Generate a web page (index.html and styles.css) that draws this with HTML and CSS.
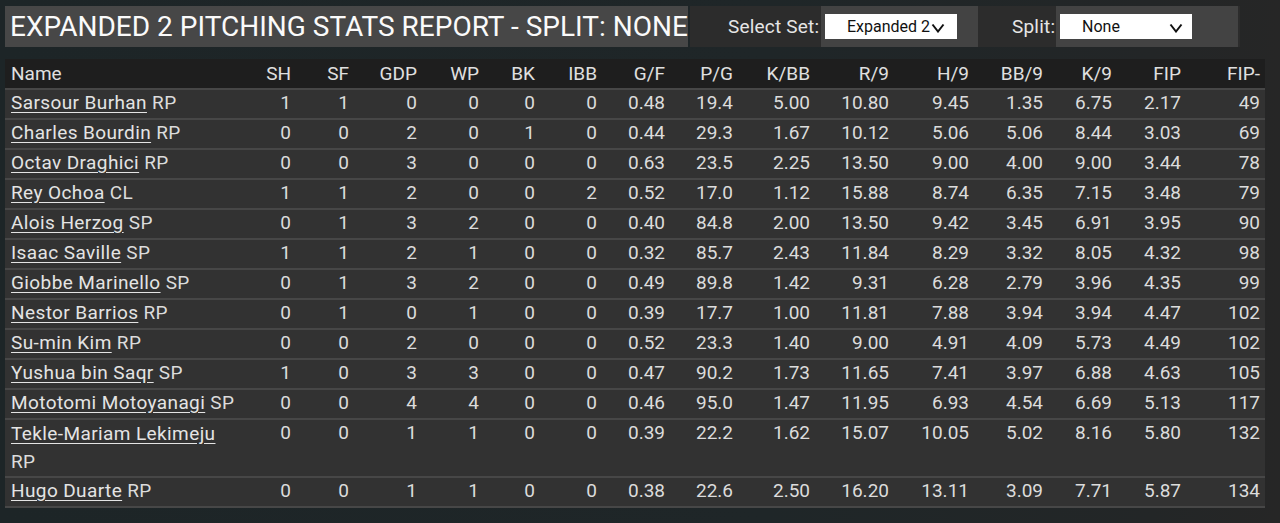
FILE: index.html
```html
<!DOCTYPE html>
<html>
<head>
<meta charset="utf-8">
<link rel="stylesheet" href="styles.css">
</head>
<body>
<div class="page">
  <header class="topbar">
    <h1 class="title">EXPANDED 2 PITCHING STATS REPORT - SPLIT: NONE</h1>
    <div class="controls">
      <label class="ctl-label set-label">Select Set:</label>
      <div class="ctl-box set-box">
        <div class="select set-select"><span class="sel-text">Expanded 2</span><svg class="chev" width="14" height="10" viewBox="0 0 14 10"><polyline points="1.5,1.5 7,8.5 12.5,1.5" fill="none" stroke="#111" stroke-width="2"/></svg></div>
      </div>
      <label class="ctl-label split-label">Split:</label>
      <div class="ctl-box split-box">
        <div class="select split-select"><span class="sel-text">None</span><svg class="chev" width="14" height="10" viewBox="0 0 14 10"><polyline points="1.5,1.5 7,8.5 12.5,1.5" fill="none" stroke="#111" stroke-width="2"/></svg></div>
      </div>
    </div>
  </header>
  <table class="stats">
    <colgroup>
      <col style="width:235px"><col style="width:56px"><col style="width:58px"><col style="width:68px"><col style="width:62px"><col style="width:56px"><col style="width:62px"><col style="width:68px"><col style="width:68px"><col style="width:77px"><col style="width:79px"><col style="width:80px"><col style="width:74px"><col style="width:69px"><col style="width:69px"><col style="width:79px">
    </colgroup>
    <thead>
      <tr><th class="name">Name</th><th>SH</th><th>SF</th><th>GDP</th><th>WP</th><th>BK</th><th>IBB</th><th>G/F</th><th>P/G</th><th>K/BB</th><th>R/9</th><th>H/9</th><th>BB/9</th><th>K/9</th><th>FIP</th><th>FIP-</th></tr>
    </thead>
    <tbody>
      <tr><td class="name"><a>Sarsour Burhan</a> RP</td><td>1</td><td>1</td><td>0</td><td>0</td><td>0</td><td>0</td><td>0.48</td><td>19.4</td><td>5.00</td><td>10.80</td><td>9.45</td><td>1.35</td><td>6.75</td><td>2.17</td><td>49</td></tr>
      <tr><td class="name"><a>Charles Bourdin</a> RP</td><td>0</td><td>0</td><td>2</td><td>0</td><td>1</td><td>0</td><td>0.44</td><td>29.3</td><td>1.67</td><td>10.12</td><td>5.06</td><td>5.06</td><td>8.44</td><td>3.03</td><td>69</td></tr>
      <tr><td class="name"><a>Octav Draghici</a> RP</td><td>0</td><td>0</td><td>3</td><td>0</td><td>0</td><td>0</td><td>0.63</td><td>23.5</td><td>2.25</td><td>13.50</td><td>9.00</td><td>4.00</td><td>9.00</td><td>3.44</td><td>78</td></tr>
      <tr><td class="name"><a>Rey Ochoa</a> CL</td><td>1</td><td>1</td><td>2</td><td>0</td><td>0</td><td>2</td><td>0.52</td><td>17.0</td><td>1.12</td><td>15.88</td><td>8.74</td><td>6.35</td><td>7.15</td><td>3.48</td><td>79</td></tr>
      <tr><td class="name"><a>Alois Herzog</a> SP</td><td>0</td><td>1</td><td>3</td><td>2</td><td>0</td><td>0</td><td>0.40</td><td>84.8</td><td>2.00</td><td>13.50</td><td>9.42</td><td>3.45</td><td>6.91</td><td>3.95</td><td>90</td></tr>
      <tr><td class="name"><a>Isaac Saville</a> SP</td><td>1</td><td>1</td><td>2</td><td>1</td><td>0</td><td>0</td><td>0.32</td><td>85.7</td><td>2.43</td><td>11.84</td><td>8.29</td><td>3.32</td><td>8.05</td><td>4.32</td><td>98</td></tr>
      <tr><td class="name"><a>Giobbe Marinello</a> SP</td><td>0</td><td>1</td><td>3</td><td>2</td><td>0</td><td>0</td><td>0.49</td><td>89.8</td><td>1.42</td><td>9.31</td><td>6.28</td><td>2.79</td><td>3.96</td><td>4.35</td><td>99</td></tr>
      <tr><td class="name"><a>Nestor Barrios</a> RP</td><td>0</td><td>1</td><td>0</td><td>1</td><td>0</td><td>0</td><td>0.39</td><td>17.7</td><td>1.00</td><td>11.81</td><td>7.88</td><td>3.94</td><td>3.94</td><td>4.47</td><td>102</td></tr>
      <tr><td class="name"><a>Su-min Kim</a> RP</td><td>0</td><td>0</td><td>2</td><td>0</td><td>0</td><td>0</td><td>0.52</td><td>23.3</td><td>1.40</td><td>9.00</td><td>4.91</td><td>4.09</td><td>5.73</td><td>4.49</td><td>102</td></tr>
      <tr><td class="name"><a>Yushua bin Saqr</a> SP</td><td>1</td><td>0</td><td>3</td><td>3</td><td>0</td><td>0</td><td>0.47</td><td>90.2</td><td>1.73</td><td>11.65</td><td>7.41</td><td>3.97</td><td>6.88</td><td>4.63</td><td>105</td></tr>
      <tr><td class="name"><a>Mototomi Motoyanagi</a> SP</td><td>0</td><td>0</td><td>4</td><td>4</td><td>0</td><td>0</td><td>0.46</td><td>95.0</td><td>1.47</td><td>11.95</td><td>6.93</td><td>4.54</td><td>6.69</td><td>5.13</td><td>117</td></tr>
      <tr class="tall"><td class="name"><a>Tekle-Mariam Lekimeju</a> RP</td><td>0</td><td>0</td><td>1</td><td>1</td><td>0</td><td>0</td><td>0.39</td><td>22.2</td><td>1.62</td><td>15.07</td><td>10.05</td><td>5.02</td><td>8.16</td><td>5.80</td><td>132</td></tr>
      <tr><td class="name"><a>Hugo Duarte</a> RP</td><td>0</td><td>0</td><td>1</td><td>1</td><td>0</td><td>0</td><td>0.38</td><td>22.6</td><td>2.50</td><td>16.20</td><td>13.11</td><td>3.09</td><td>7.71</td><td>5.87</td><td>134</td></tr>
    </tbody>
  </table>
</div>
</body>
</html>
```
FILE: styles.css
```css
html, body {
  margin: 0;
  padding: 0;
}
body {
  width: 1280px;
  height: 523px;
  overflow: hidden;
  background: linear-gradient(90deg, #1d2527 0%, #1f2628 60%, #232627 90%, #262626 100%);
  font-family: Roboto, "Liberation Sans", sans-serif;
  color: #e2e2e2;
}
.page {
  padding: 6px 15px 0 5px;
}
.topbar {
  display: flex;
  height: 41px;
}
.title {
  margin: 0;
  width: 683px;
  background: #474747;
  color: #fafafa;
  font-weight: 400;
  font-size: 28px;
  line-height: 41px;
  padding: 0 0 0 5px;
  white-space: nowrap;
  box-sizing: border-box;
}
.controls {
  display: flex;
  align-items: stretch;
  background: #2c2c2c;
  width: 550px;
  margin-left: 2px;
}
.ctl-label {
  font-size: 19px;
  color: #e6e6e6;
  display: flex;
  align-items: center;
  letter-spacing: 0.2px;
}
.set-label { padding-left: 38px; width: 93px; }
.split-label { margin-left: 34px; width: 44px; }
.ctl-box {
  background: #434343;
  display: flex;
  align-items: center;
  padding: 0 0 0 4px;
  box-sizing: border-box;
}
.set-box { width: 157px; }
.split-box { width: 182px; }
.select {
  background: #ffffff;
  color: #111;
  height: 25px;
  width: 132px;
  display: flex;
  align-items: center;
  font-size: 16px;
  box-sizing: border-box;
}
.set-select { justify-content: flex-end; padding-right: 12px; }
.set-select .chev { margin-left: 1px; margin-top: 2px; }
.split-select .sel-text { padding-left: 22px; flex: 1; }
.split-select .chev { margin-right: 9px; margin-top: 2px; }
.stats {
  margin-top: 12px;
  width: 1260px;
  table-layout: fixed;
  border-collapse: collapse;
  font-size: 19px;
}
.stats th {
  background: #1e1e1e;
  font-weight: 400;
  height: 29px;
  padding: 0 5px 0 0;
  text-align: right;
  color: #e0e0e0;
}
.stats td {
  background: #323232;
  border-top: 2px solid #474747;
  padding: 0 5px 2px 0;
  line-height: 26px;
  height: 26px;
  text-align: right;
  color: #dcdcdc;
  vertical-align: top;
}
.stats tbody tr:last-child td {
  border-bottom: 2px solid #474747;
}
.stats .name {
  text-align: left;
  padding-left: 6px;
  padding-right: 0;
}
.stats td.name {
  letter-spacing: 0.4px;
}
.stats .tall td.name {
  line-height: 28px;
  height: 56px;
  padding-bottom: 0;
}
.stats a {
  color: #e4e4e4;
  text-decoration: underline;
  text-underline-offset: 3px;
}
```
